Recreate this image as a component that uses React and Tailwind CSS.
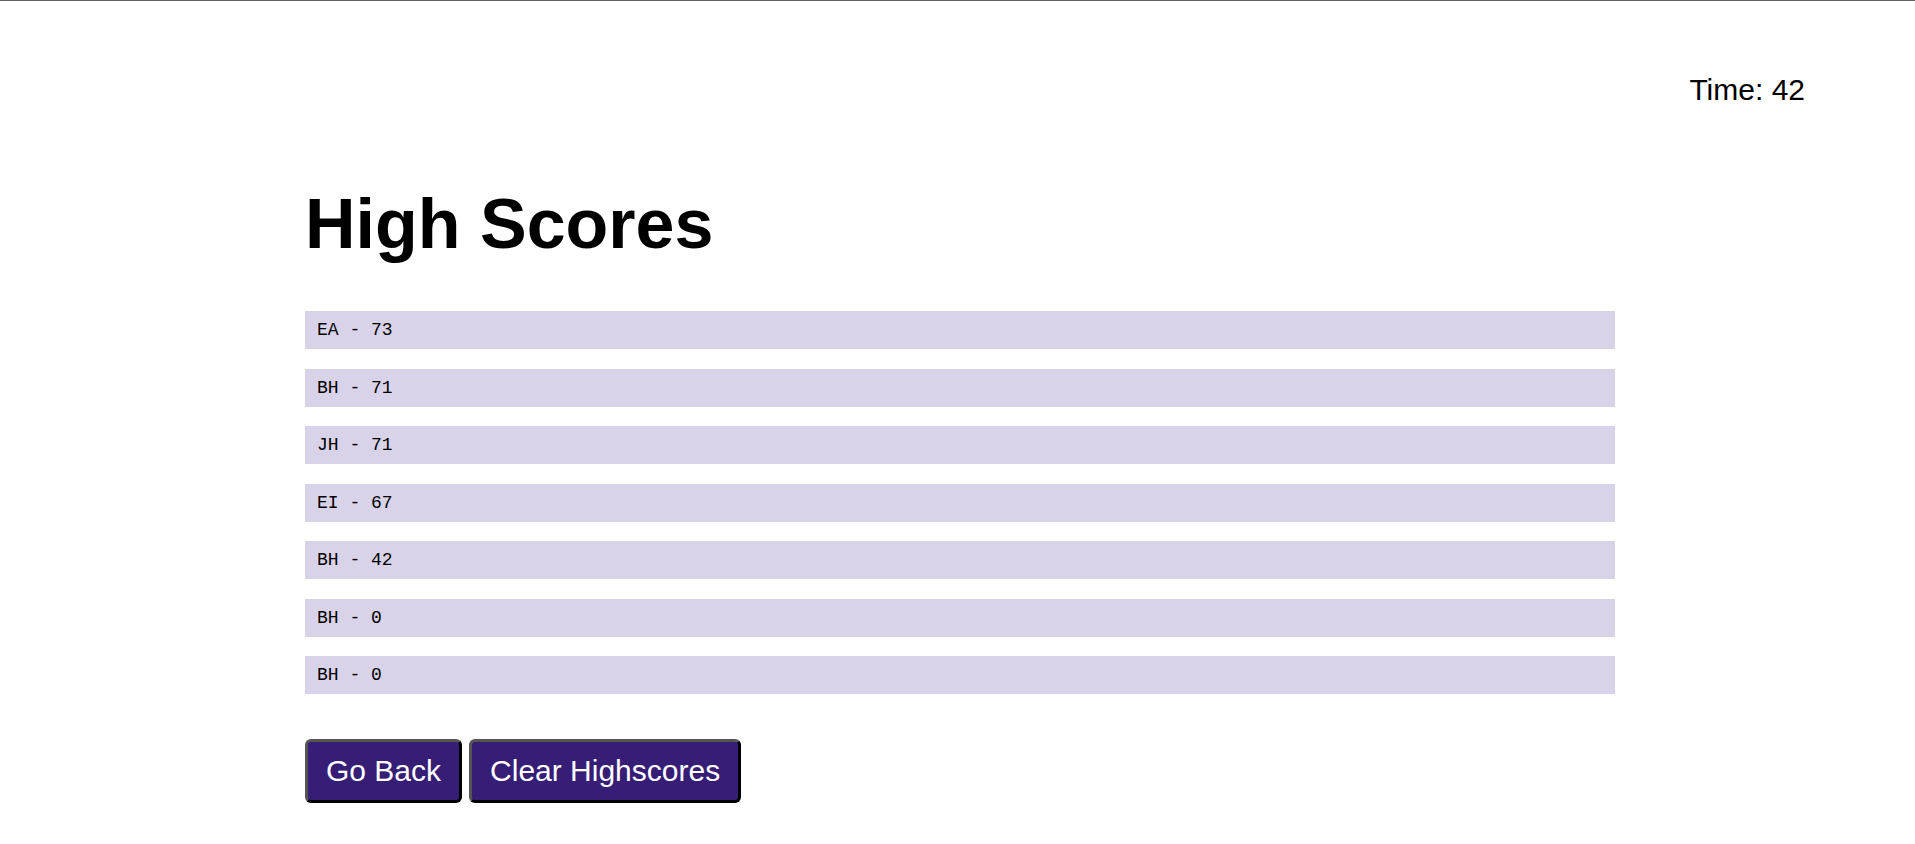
const scores = [
  { initials: "EA", score: 73 },
  { initials: "BH", score: 71 },
  { initials: "JH", score: 71 },
  { initials: "EI", score: 67 },
  { initials: "BH", score: 42 },
  { initials: "BH", score: 0 },
  { initials: "BH", score: 0 },
];

function ActionButton({ children }) {
  return (
    <button
      type="button"
      className="rounded-md border-3 border-t-[#555555] border-r-black border-b-black border-l-[#555555] bg-[#361d75] px-[18px] py-3 text-[30px] leading-[34px] text-white"
    >
      {children}
    </button>
  );
}

export default function App() {
  return (
    <div className="min-h-screen border-t border-[#625f66] bg-white font-['Liberation_Sans',Arial,sans-serif] text-black">
      <header className="flex justify-end pt-[72px] pr-[110px]">
        <p className="text-[30px] leading-[34px]">Time: 42</p>
      </header>
      <main className="mr-[300px] ml-[305px] pt-[77px]">
        <h1 className="text-[70px] leading-[80px] font-bold">High Scores</h1>
        <ol className="mt-[47px] flex min-h-[383px] flex-col justify-between font-['Liberation_Mono',monospace] text-[18px] leading-[22px]">
          {scores.map(({ initials, score }, index) => (
            <li key={index} className="bg-[#d8d3e8] px-3 py-2">
              {initials} - {score}
            </li>
          ))}
        </ol>
        <div className="mt-[45px] flex flex-wrap gap-[7px]">
          <ActionButton>Go Back</ActionButton>
          <ActionButton>Clear Highscores</ActionButton>
        </div>
      </main>
    </div>
  );
}
